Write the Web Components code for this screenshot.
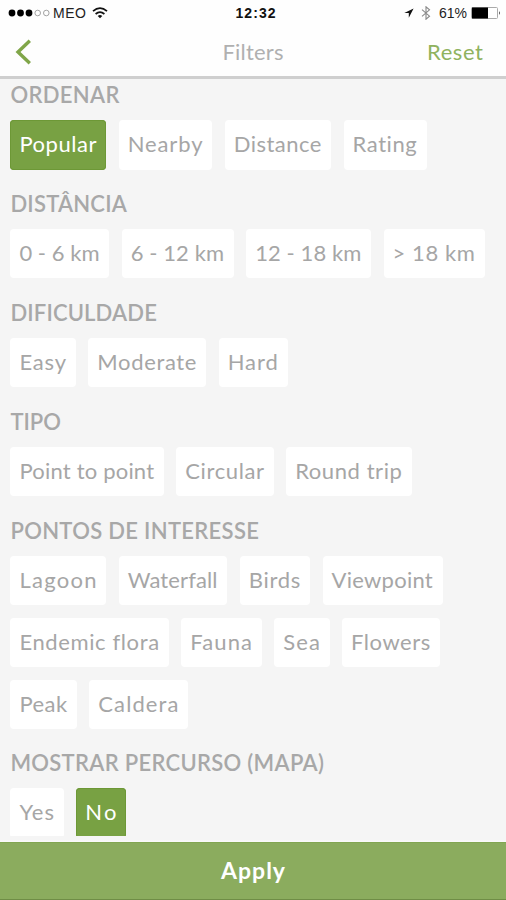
<!DOCTYPE html>
<html lang="pt">
<head>
<meta charset="utf-8">
<title>Filters</title>
<style>
html, body { margin: 0; height: 100%; }
body { font-family: Lato, "Open Sans", sans-serif; background: #f5f5f5; overflow: hidden; }
</style>
</head>
<body>
<filter-screen></filter-screen>
<script>
const attach = (el, html) => { el.attachShadow({ mode: 'open' }).innerHTML = html; };

// Spreads the letters of an inline label so that it occupies the given width.
const track = (el, width) => {
  const n = [...el.textContent].length - 1;
  const spacing = (width - el.getBoundingClientRect().width) / n;
  el.style.letterSpacing = spacing.toFixed(3) + 'px';
  el.style.marginRight = (-spacing).toFixed(3) + 'px';
};

customElements.define('fit-text', class extends HTMLElement {
  connectedCallback() {
    attach(this, `<style>:host{display:inline-block;white-space:pre}span{display:inline-block;font-kerning:normal;font-variant-ligatures:none}</style><span></span>`);
    const s = this.shadowRoot.querySelector('span');
    s.textContent = this.getAttribute('text');
    track(s, +this.getAttribute('width'));
  }
});

customElements.define('status-bar', class extends HTMLElement {
  connectedCallback() {
    attach(this, `<style>
      :host{display:grid;grid-template-columns:minmax(0,1fr) auto minmax(0,1fr);height:26px;align-items:center;font:14px/26px "Liberation Sans",Arial,sans-serif;color:#222;padding:0 5px 0 8px;box-sizing:border-box}
      .l,.r{display:flex;align-items:center}.r{justify-content:flex-end}
      b{font-size:14px;font-weight:700;color:#111;padding-left:2px}svg{display:block;flex:none}
    </style>
    <div class="l">
      <svg width="43" height="10" viewBox="0 0 43 10"><g fill="#000"><circle cx="4" cy="5" r="3.4"/><circle cx="12.5" cy="5" r="3.4"/><circle cx="21" cy="5" r="3.4"/></g><g fill="none" stroke="#999" stroke-width=".9"><circle cx="29.7" cy="5" r="2.8"/><circle cx="38.3" cy="5" r="2.8"/></g></svg>
      <fit-text text="MEO" width="33" style="margin-left:2px"></fit-text>
      <svg width="16" height="12" viewBox="0 0 16 12" style="margin-left:6px"><g fill="none" stroke="#111" stroke-width="1.7"><path d="M1 4.2Q8-1.9 15 4.2"/><path d="M3.6 7Q8 3.1 12.4 7"/></g><path d="M5.7 8.9Q8 7.1 10.3 8.9L8 11.3z" fill="#111"/></svg>
    </div>
    <b><fit-text text="12:32" width="40"></fit-text></b>
    <div class="r">
      <svg width="10" height="10" viewBox="0 0 10 10"><path d="M9.6.4L.3 5.1H4.8V9.7z" fill="#111"/></svg>
      <svg width="10" height="14" viewBox="0 0 10 14" style="margin-left:7px"><path d="M1 3.7L8.5 10.2 5 13.2V.8L8.5 3.8 1 10.3" fill="none" stroke="#888" stroke-width="1.1"/></svg>
      <fit-text text="61%" width="28" style="margin-left:8px"></fit-text>
      <svg width="30" height="12" viewBox="0 0 30 12" style="margin-left:4px"><rect x=".5" y=".5" width="26" height="11" rx="1" fill="#fff" stroke="#aaa"/><path d="M1 .5H17V11.5H1z" fill="#000"/><path d="M28 4Q29.8 6 28 8z" fill="#222"/></svg>
    </div>`);
  }
});

customElements.define('nav-bar', class extends HTMLElement {
  connectedCallback() {
    attach(this, `<style>
      :host{display:grid;grid-template-columns:minmax(0,1fr) auto minmax(0,1fr);height:50px;align-items:center;font-size:22px;line-height:51px;color:#b0b0b0;padding:0 23px 0 15px;border-bottom:3px solid #cfcfcf}
      svg{display:block}.r{text-align:right;color:#8fb25e}.m{padding-left:8px}
    </style>
    <svg width="17" height="26" viewBox="0 0 17 26"><path d="M14.8 1.8L3 13 14.8 24.2" fill="none" stroke="#80a649" stroke-width="3.4"/></svg>
    <div class="m"><fit-text text="Filters" width="61"></fit-text></div>
    <div class="r"><fit-text text="Reset" width="56"></fit-text></div>`);
  }
});

customElements.define('filter-chip', class extends HTMLElement {
  connectedCallback() {
    const w = +this.getAttribute('width');
    attach(this, `<style>
      :host{display:block;box-sizing:border-box;width:${w}px;height:49.5px;border-radius:4px;background:#fff;color:#a6a6a6;font-size:22px;line-height:48.4px;padding-left:9px;white-space:nowrap}
      :host([selected]){background:#78a143;color:#fff;box-shadow:inset 0 0 0 1px #6d9836}
    </style><fit-text text="${this.getAttribute('label')}" width="${w - 18.8}"></fit-text>`);
  }
});

customElements.define('filter-group', class extends HTMLElement {
  connectedCallback() {
    attach(this, `<style>
      :host{display:block}
      h2{margin:0;height:41px;font-size:22px;font-weight:600;line-height:32px;color:#a8a8a8}
      .chips{display:flex;flex-wrap:wrap;gap:12.5px 12.4px;margin-bottom:18.4px}
    </style><h2><fit-text text="${this.getAttribute('heading')}" width="${this.getAttribute('width')}"></fit-text></h2><div class="chips"><slot></slot></div>`);
  }
});

customElements.define('apply-button', class extends HTMLElement {
  connectedCallback() {
    attach(this, `<style>
      :host{display:block;height:58px;flex:none;box-sizing:border-box;background:#8bac5e;border-top:1px solid #82a652;border-bottom:1px solid #6f8d46;color:#fff;text-align:center;font-size:23px;font-weight:700;line-height:55px}
    </style><fit-text text="Apply" width="64"></fit-text>`);
  }
});

const groups = [
  ['ORDENAR', 109, [['Popular', 96, 1], ['Nearby', 93.5], ['Distance', 106.5], ['Rating', 83]]],
  ['DISTÂNCIA', 116.5, [['0 - 6 km', 99], ['6 - 12 km', 112], ['12 - 18 km', 125], ['&gt; 18 km', 101]]],
  ['DIFICULDADE', 146.5, [['Easy', 65.5], ['Moderate', 118], ['Hard', 69]]],
  ['TIPO', 50.5, [['Point to point', 153.5], ['Circular', 97.5], ['Round trip', 125.5]]],
  ['PONTOS DE INTERESSE', 248.5, [['Lagoon', 96], ['Waterfall', 108.5], ['Birds', 70.5], ['Viewpoint', 120], ['Endemic flora', 158.5], ['Fauna', 80.5], ['Sea', 55.5], ['Flowers', 98], ['Peak', 66.5], ['Caldera', 99]]],
  ['MOSTRAR PERCURSO (MAPA)', 313.5, [['Yes', 53.5], ['No', 50, 1]]]
];

customElements.define('filter-screen', class extends HTMLElement {
  connectedCallback() {
    attach(this, `<style>
      :host{display:flex;flex-direction:column;height:900px;width:506px;background:#f5f5f5}
      header{background:#fefefe;flex:none}
      main{flex:none;height:756.5px;overflow:hidden;padding:0 10.4px;box-sizing:border-box}
      .gap{flex:1;background:linear-gradient(#f5f5f5 4px,#fafafa 5px)}
    </style>
    <header><status-bar></status-bar><nav-bar></nav-bar></header>
    <main>${groups.map(([h, w, cs]) => `<filter-group heading="${h}" width="${w}">${cs.map(([l, cw, on]) => `<filter-chip label="${l}" width="${cw}"${on ? ' selected' : ''}></filter-chip>`).join('')}</filter-group>`).join('')}</main>
    <div class="gap"></div>
    <apply-button></apply-button>`);
  }
});
</script>
</body>
</html>
